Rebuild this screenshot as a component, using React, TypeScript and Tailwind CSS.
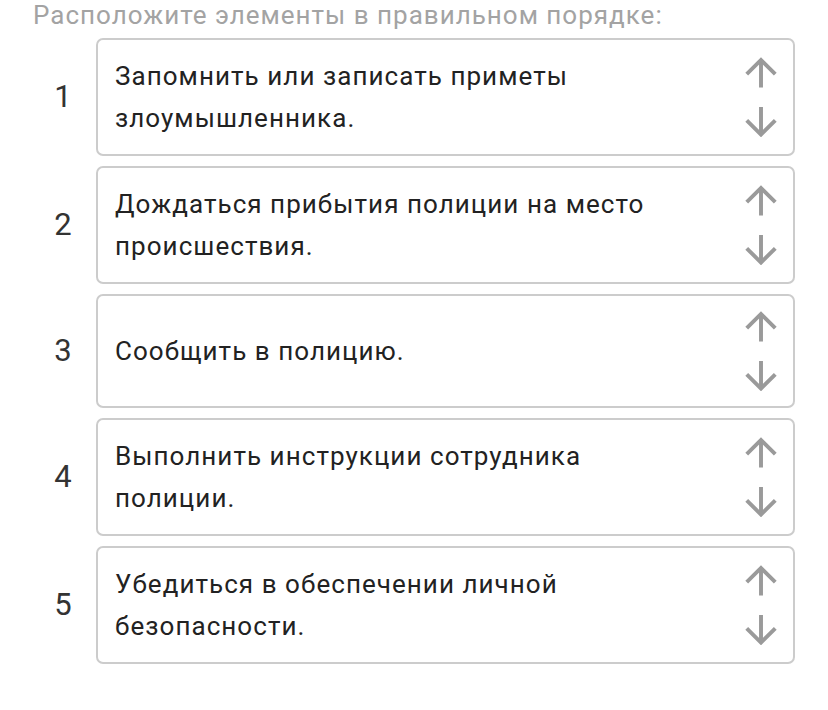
import React from "react";

const items = [
  "Запомнить или записать приметы злоумышленника.",
  "Дождаться прибытия полиции на место происшествия.",
  "Сообщить в полицию.",
  "Выполнить инструкции сотрудника полиции.",
  "Убедиться в обеспечении личной безопасности.",
];

function UpArrow() {
  return (
    <svg width="34" height="32" viewBox="0 0 34 32" fill="none" stroke="#9a9a9a" strokeWidth="4">
      <path d="M17 3 V31" strokeLinecap="butt" />
      <path d="M2.5 17.5 L17 3 L31.5 17.5" strokeLinejoin="miter" />
    </svg>
  );
}

function DownArrow() {
  return (
    <svg width="34" height="32" viewBox="0 0 34 32" fill="none" stroke="#9a9a9a" strokeWidth="4">
      <path d="M17 1 V29" strokeLinecap="butt" />
      <path d="M2.5 14.5 L17 29 L31.5 14.5" strokeLinejoin="miter" />
    </svg>
  );
}

export default function App() {
  return (
    <div
      className="w-[828px] h-[710px] bg-white pl-[30px] pr-[33px]"
      style={{ fontFamily: "Roboto, 'Noto Sans', sans-serif" }}
    >
      <div className="pl-[3px] text-[26px] leading-[30px] tracking-[1px] text-[#a3a3a3] h-[38px] whitespace-nowrap">
        Расположите элементы в правильном порядке:
      </div>
      <div className="flex flex-col gap-[10px]">
        {items.map((t, i) => (
          <div key={i} className="flex items-center">
            <div className="w-[66px] text-center text-[31px] text-[#333333]">{i + 1}</div>
            <div className="flex-1 flex items-center border-2 border-[#cccccc] rounded-[7px] pl-[17px] pr-[15px] py-[15px]">
              <div className="flex-1 text-[26px] leading-[42px] tracking-[1.05px] text-[#222222] pr-[60px]">{t}</div>
              <div className="flex flex-col items-center gap-[17px] h-[80px] justify-center">
                <UpArrow />
                <DownArrow />
              </div>
            </div>
          </div>
        ))}
      </div>
    </div>
  );
}
